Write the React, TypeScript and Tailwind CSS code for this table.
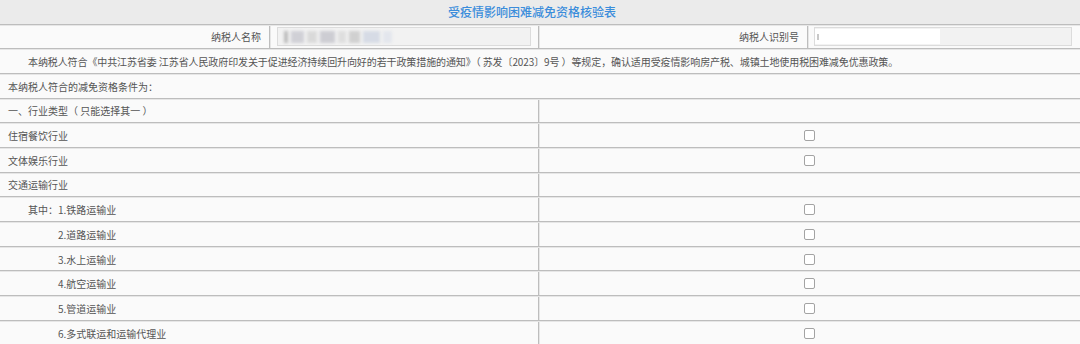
const font = { fontFamily: '"Noto Sans CJK SC", "Noto Sans", sans-serif' };

type Item = { label: string; indent: 'none' | 'mid' | 'deep'; check: boolean };

const items: Item[] = [
  { label: '一、行业类型（ 只能选择其一 ）', indent: 'none', check: false },
  { label: '住宿餐饮行业', indent: 'none', check: true },
  { label: '文体娱乐行业', indent: 'none', check: true },
  { label: '交通运输行业', indent: 'none', check: false },
  { label: '其中：1.铁路运输业', indent: 'mid', check: true },
  { label: '2.道路运输业', indent: 'deep', check: true },
  { label: '3.水上运输业', indent: 'deep', check: true },
  { label: '4.航空运输业', indent: 'deep', check: true },
  { label: '5.管道运输业', indent: 'deep', check: true },
  { label: '6.多式联运和运输代理业', indent: 'deep', check: true },
];

const row = 'flex h-[24.7px] shrink-0 border-t border-b border-t-[#e6e6e6] border-b-[#bdbdbd]';

function Checkbox() {
  return <span className="block h-[11px] w-[11px] rounded-[2px] border border-[#a3a3a3] bg-white" />;
}

export default function App() {
  return (
    <div className="flex h-[344px] w-[1080px] flex-col overflow-hidden bg-[#fafafa] text-[10px] text-[#555]" style={font}>
      <div className="flex h-[24.5px] shrink-0 items-center justify-center border-b border-[#bdbdbd] bg-[#ebebeb] pr-[16px] text-[12px] font-medium text-[#3b8ddb]">
        受疫情影响困难减免资格核验表
      </div>

      <div className={row}>
        <div className="flex w-[270px] items-center justify-end border-r border-[#bdbdbd] pr-[8px]">纳税人名称</div>
        <div className="flex w-[269px] items-center border-l border-[#e6e6e6] border-r border-r-[#bdbdbd] pl-[6px] pr-[7px]">
          <div className="flex h-[19px] w-full items-center border border-[#dcdcdc] bg-[#f2f2f2] pl-[6px]">
            <div className="flex h-[12px] w-[108px] gap-[3px] opacity-80 blur-[1.5px]">
              <span className="w-[4px] bg-[#b0b0b0]" />
              <span className="w-[14px] bg-[#c8c8d0]" />
              <span className="w-[10px] bg-[#d4d4d4]" />
              <span className="w-[16px] bg-[#c4c4cc]" />
              <span className="w-[8px] bg-[#dadada]" />
              <span className="w-[12px] bg-[#c8c8c8]" />
              <span className="w-[18px] bg-[#d0d6e2]" />
              <span className="w-[9px] bg-[#e0e4ec]" />
            </div>
          </div>
        </div>
        <div className="flex w-[269px] items-center justify-end border-l border-[#e6e6e6] border-r border-r-[#bdbdbd] pr-[8px]">纳税人识别号</div>
        <div className="flex flex-1 items-center border-l border-[#e6e6e6] pl-[5px] pr-[8px]">
          <div className="flex h-[19px] w-full items-center border border-[#dcdcdc] bg-[#f2f2f2]">
            <div className="flex h-[15px] w-[125px] items-center bg-white pl-[2px]">
              <span className="h-[6px] w-[2px] bg-[#c8c8c8] blur-[0.5px]" />
            </div>
          </div>
        </div>
      </div>

      <div className={row}>
        <div className="flex flex-1 items-center pl-[8px] indent-[20px] tracking-[-0.1px] whitespace-nowrap">
          本纳税人符合《中共江苏省委 江苏省人民政府印发关于促进经济持续回升向好的若干政策措施的通知》（ 苏发〔2023〕9号 ）等规定，确认适用受疫情影响房产税、城镇土地使用税困难减免优惠政策。
        </div>
      </div>

      <div className={row}>
        <div className="flex flex-1 items-center pl-[8px]">本纳税人符合的减免资格条件为：</div>
      </div>

      {items.map((item) => (
        <div key={item.label} className={row}>
          <div
            className={`flex w-[539px] items-center border-r border-[#bdbdbd] ${
              item.indent === 'none' ? 'pl-[8px]' : item.indent === 'mid' ? 'pl-[28px]' : 'pl-[58px]'
            }`}
          >
            {item.label}
          </div>
          <div className="flex flex-1 items-center justify-center border-l border-[#e6e6e6] pr-[1px]">
            {item.check && <Checkbox />}
          </div>
        </div>
      ))}
    </div>
  );
}
